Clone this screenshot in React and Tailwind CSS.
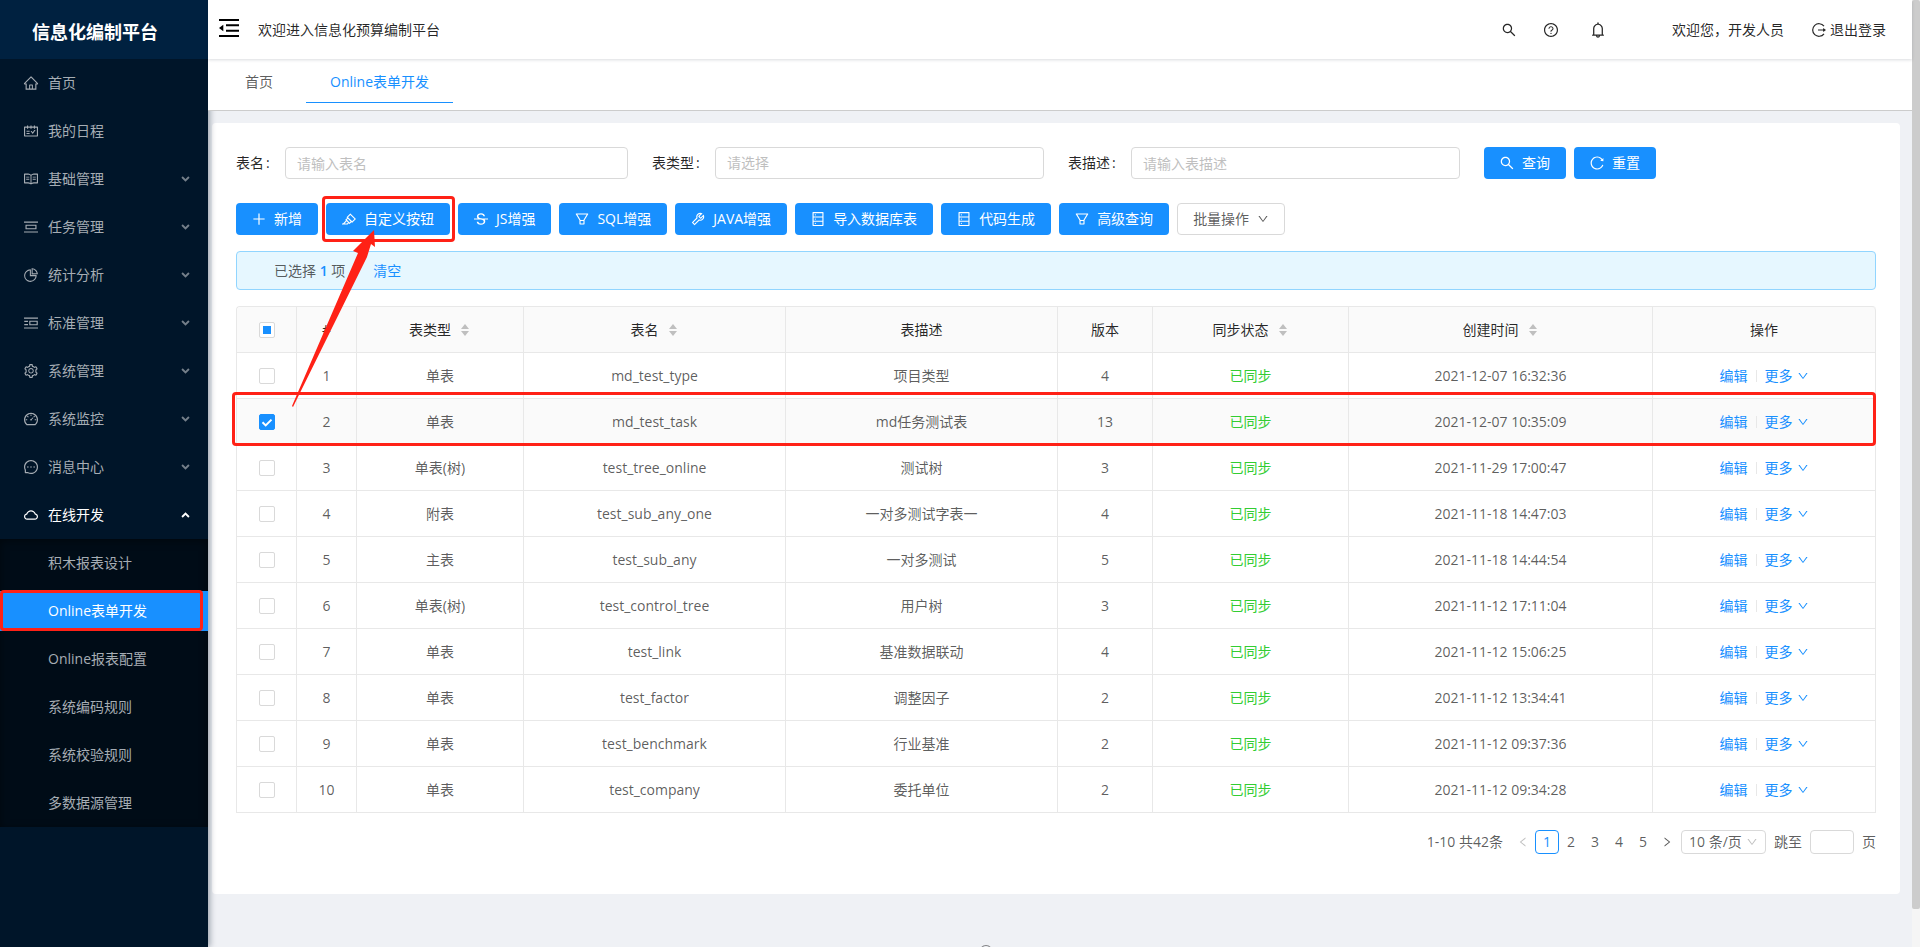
import { useState } from 'react'
import { clsx } from 'clsx'
import {
  AiOutlineHome,
  AiOutlineSchedule,
  AiOutlineRead,
  AiOutlinePicCenter,
  AiOutlinePieChart,
  AiOutlinePicRight,
  AiOutlineSetting,
  AiOutlineDashboard,
  AiOutlineMessage,
  AiOutlineCloud,
  AiOutlineSearch,
  AiOutlineQuestionCircle,
  AiOutlineBell,
  AiOutlinePlus,
  AiOutlineHighlight,
  AiOutlineStrikethrough,
  AiOutlineFilter,
  AiOutlineTool,
  AiOutlineDatabase,
  AiOutlineReload,
  AiOutlineDown,
  AiOutlineLeft,
  AiOutlineRight,
  AiOutlineCopyright,
} from 'react-icons/ai'

const MENU = [
  { label: '首页', icon: AiOutlineHome },
  { label: '我的日程', icon: AiOutlineSchedule },
  { label: '基础管理', icon: AiOutlineRead, group: true },
  { label: '任务管理', icon: AiOutlinePicCenter, group: true },
  { label: '统计分析', icon: AiOutlinePieChart, group: true },
  { label: '标准管理', icon: AiOutlinePicRight, group: true },
  { label: '系统管理', icon: AiOutlineSetting, group: true },
  { label: '系统监控', icon: AiOutlineDashboard, group: true },
  { label: '消息中心', icon: AiOutlineMessage, group: true },
  { label: '在线开发', icon: AiOutlineCloud, group: true, open: true },
]

const SUBMENU = ['积木报表设计', 'Online表单开发', 'Online报表配置', '系统编码规则', '系统校验规则', '多数据源管理']

const ACTIONS = [
  { label: '新增', icon: AiOutlinePlus },
  { label: '自定义按钮', icon: AiOutlineHighlight, marked: true },
  { label: 'JS增强', icon: AiOutlineStrikethrough },
  { label: 'SQL增强', icon: AiOutlineFilter },
  { label: 'JAVA增强', icon: AiOutlineTool },
  { label: '导入数据库表', icon: AiOutlineDatabase },
  { label: '代码生成', icon: AiOutlineDatabase },
  { label: '高级查询', icon: AiOutlineFilter },
]

const COLUMNS = [
  { label: '#', width: 'w-[60px]' },
  { label: '表类型', width: 'w-[167px]', sort: true },
  { label: '表名', width: 'w-[262px]', sort: true },
  { label: '表描述', width: 'w-[272px]' },
  { label: '版本', width: 'w-[95px]' },
  { label: '同步状态', width: 'w-[196px]', sort: true },
  { label: '创建时间', width: 'w-[304px]', sort: true },
  { label: '操作', width: 'w-[223px]' },
]

const ROWS = [
  ['单表', 'md_test_type', '项目类型', 4, '2021-12-07 16:32:36'],
  ['单表', 'md_test_task', 'md任务测试表', 13, '2021-12-07 10:35:09'],
  ['单表(树)', 'test_tree_online', '测试树', 3, '2021-11-29 17:00:47'],
  ['附表', 'test_sub_any_one', '一对多测试字表一', 4, '2021-11-18 14:47:03'],
  ['主表', 'test_sub_any', '一对多测试', 5, '2021-11-18 14:44:54'],
  ['单表(树)', 'test_control_tree', '用户树', 3, '2021-11-12 17:11:04'],
  ['单表', 'test_link', '基准数据联动', 4, '2021-11-12 15:06:25'],
  ['单表', 'test_factor', '调整因子', 2, '2021-11-12 13:34:41'],
  ['单表', 'test_benchmark', '行业基准', 2, '2021-11-12 09:37:36'],
  ['单表', 'test_company', '委托单位', 2, '2021-11-12 09:34:28'],
]

const fieldClass =
  'h-8 min-w-0 flex-1 appearance-none rounded border border-[#d9d9d9] bg-white px-[11px] outline-none placeholder:text-[#bfbfbf]'

const buttonClass = 'relative flex h-8 items-center gap-[7px] rounded bg-[#1890ff] pr-4 pl-[15px] text-white'

const Arrow = ({ up }) => (
  <svg viewBox="0 0 10 7" className={clsx('h-1.5 w-[9px]', !up && 'opacity-70')} fill="none" stroke="currentColor" strokeWidth="2.2">
    <path d={up ? 'M1 5.8 5 1.8 9 5.8' : 'M1 1.2 5 5.2 9 1.2'} />
  </svg>
)

const Sidebar = () => (
  <aside className="relative z-20 w-52 shrink-0 bg-[#001529] text-[#a6adb4] shadow-[2px_0_6px_rgba(0,21,41,0.35)]">
    <h1 className="flex h-[59px] items-center bg-[#002140] pt-1 pl-8 text-lg font-bold text-white">信息化编制平台</h1>
    <nav>
      {MENU.map(({ label, icon: Icon, group, open }) => (
        <a key={label} href="#" className={clsx('flex h-12 items-center gap-[9px] pr-[18px] pl-[23px]', open && 'text-white')}>
          <Icon size={16} />
          <span className="flex-1">{label}</span>
          {group && <Arrow up={open} />}
        </a>
      ))}
      <div className="bg-[#000c17] shadow-[inset_0_2px_8px_rgba(0,0,0,0.45)]">
        {SUBMENU.map((label, i) => (
          <div key={label} className="py-1">
            <a href="#" className={clsx('relative flex h-10 items-center pl-12', i === 1 && 'bg-[#1890ff] text-white')}>
              {label}
              {i === 1 && <span className="absolute -top-px right-[5px] bottom-0 left-0 rounded-sm border-3 border-[#ff2116]" />}
            </a>
          </div>
        ))}
      </div>
    </nav>
  </aside>
)

const Header = () => (
  <header className="relative z-40 flex h-[59px] shrink-0 items-center bg-white pr-[26px] pl-[11px] text-black/85 shadow-[0_1px_3px_rgba(0,21,41,0.15)]">
    <button aria-label="收起菜单" className="mb-1 text-black">
      <svg viewBox="0 0 20 18" className="h-[18px] w-5" fill="none" stroke="currentColor" strokeWidth="2">
        <path d="M0 1h20M7 6.3h13M7 11.7h13M0 17h20" />
        <path d="M0 9 4.3 5.7v6.6z" fill="currentColor" stroke="none" />
      </svg>
    </button>
    <span className="flex-1 pl-[19px]">欢迎进入信息化预算编制平台</span>
    <button aria-label="搜索"><AiOutlineSearch size={16} /></button>
    <button aria-label="帮助" className="ml-[26px]"><AiOutlineQuestionCircle size={16} /></button>
    <button aria-label="通知" className="ml-[30px]"><AiOutlineBell size={18} /></button>
    <span className="pl-[65px]">欢迎您，开发人员</span>
    <a href="#" className="ml-7 flex items-center gap-1">
      <svg viewBox="0 0 14 14" className="size-3.5" fill="none" stroke="currentColor" strokeWidth="1.2">
        <path d="M12 3.2A6.3 6.3 0 1 0 12 10.8M6 7h6" />
        <path d="M11.2 5 14 7 11.2 9z" fill="currentColor" stroke="none" />
      </svg>
      退出登录
    </a>
  </header>
)

const Field = ({ id, label, children }) => (
  <div className="flex items-center">
    <label htmlFor={id} className="text-black/85">{label}</label>
    <span className="w-[21px] pl-0.5 text-black/85">:</span>
    {children}
  </div>
)

const SearchForm = () => (
  <form className="grid grid-cols-4 gap-6">
    <Field id="name" label="表名">
      <input id="name" placeholder="请输入表名" className={fieldClass} />
    </Field>
    <Field id="type" label="表类型">
      <select id="type" className={clsx(fieldClass, 'text-[#bfbfbf]')}>
        <option>请选择</option>
      </select>
    </Field>
    <Field id="desc" label="表描述">
      <input id="desc" placeholder="请输入表描述" className={fieldClass} />
    </Field>
    <div className="flex gap-2">
      <button type="button" className={buttonClass}>
        <AiOutlineSearch size={16} />
        查询
      </button>
      <button type="button" className={buttonClass}>
        <AiOutlineReload size={16} />
        重置
      </button>
    </div>
  </form>
)

const Toolbar = () => (
  <div className="mt-6 flex flex-wrap gap-2">
    {ACTIONS.map(({ label, icon: Icon, marked }) => (
      <button key={label} className={buttonClass}>
        <Icon size={16} />
        {label}
        {marked && <span className="absolute -inset-y-[7px] -right-[5px] -left-1 rounded border-3 border-[#ff2116]" />}
      </button>
    ))}
    <button className="flex h-8 items-center gap-2 rounded border border-[#d9d9d9] bg-white px-[15px]">
      批量操作
      <AiOutlineDown size={12} />
    </button>
  </div>
)

const Check = ({ label, checked, partial, onChange }) => (
  <label className="relative mx-auto block size-4">
    <input
      type="checkbox"
      aria-label={label}
      checked={checked}
      onChange={onChange}
      className="block size-4 appearance-none rounded-xs border border-[#d9d9d9] bg-white checked:border-[#1890ff] checked:bg-[#1890ff]"
    />
    {partial && <span className="absolute inset-1 bg-[#1890ff]" />}
    {checked && (
      <svg viewBox="0 0 16 16" className="absolute inset-0 size-4" fill="none" stroke="#fff" strokeWidth="2">
        <path d="m3.5 8.2 3.2 3.2 5.8-5.8" />
      </svg>
    )}
  </label>
)

const Sorter = () => (
  <svg viewBox="0 0 8 12" className="mr-0.5 h-3 w-2" fill="#bfbfbf">
    <path d="M4 0 8 5H0zM0 7h8l-4 5z" />
  </svg>
)

const DataTable = () => {
  const [selected, setSelected] = useState([1])
  const toggle = (i) => setSelected((s) => (s.includes(i) ? s.filter((n) => n !== i) : [...s, i]))

  return (
    <div className="relative mt-4">
      <table className="w-full table-fixed border-separate border-spacing-0 rounded-t border-t border-l border-[#e8e8e8] text-center">
        <thead className="bg-[#fafafa] text-black/85">
          <tr className="h-[46px]">
            <th className="w-[60px] rounded-tl border-r border-b border-[#e8e8e8]">
              <Check label="全选" checked={false} partial={selected.length > 0} onChange={() => setSelected([])} />
            </th>
            {COLUMNS.map(({ label, width, sort }) => (
              <th key={label} className={clsx('border-r border-b border-[#e8e8e8] font-normal last:rounded-tr', width)}>
                <span className="flex items-center justify-center gap-2.5">
                  {label}
                  {sort && <Sorter />}
                </span>
              </th>
            ))}
          </tr>
        </thead>
        <tbody>
          {ROWS.map(([type, name, desc, version, time], i) => (
            <tr
              key={name}
              className={clsx('h-[46px] *:border-r *:border-b *:border-[#e8e8e8]', selected.includes(i) && 'bg-[#fafafa]')}
            >
              <td><Check label={name} checked={selected.includes(i)} onChange={() => toggle(i)} /></td>
              <td>{i + 1}</td>
              <td>{type}</td>
              <td>{name}</td>
              <td>{desc}</td>
              <td>{version}</td>
              <td className="text-[#32cd32]">已同步</td>
              <td>{time}</td>
              <td>
                <span className="flex items-center justify-center text-[#1890ff]">
                  <a href="#">编辑</a>
                  <span className="mx-2 h-3 w-px bg-[#e8e8e8]" />
                  <a href="#" className="flex items-center gap-1">
                    更多
                    <AiOutlineDown size={12} />
                  </a>
                </span>
              </td>
            </tr>
          ))}
        </tbody>
      </table>

      {/* callout round the second row, with the arrow up to its button */}
      <div className="pointer-events-none absolute top-[86px] right-0 -left-1 h-[54px] rounded-sm border-3 border-[#ff2116]" />
      <svg viewBox="0 0 86 182" className="pointer-events-none absolute -top-20 left-14 h-[182px] w-[86px]" fill="#ff2116">
        <path d="M0 180 66 27 61 25 82 4 83 21 79 18 75 31 1 181z" />
      </svg>
    </div>
  )
}

const Pagination = () => (
  <div className="mt-[17px] flex h-6 items-center justify-end">
    <span className="mr-2">1-10 共42条</span>
    <button aria-label="上一页" className="flex size-6 items-center justify-center text-black/25">
      <AiOutlineLeft size={12} />
    </button>
    {[1, 2, 3, 4, 5].map((n) => (
      <button key={n} className={clsx('size-6 rounded', n === 1 && 'border border-[#1890ff] text-[#1890ff]')}>
        {n}
      </button>
    ))}
    <button aria-label="下一页" className="flex size-6 items-center justify-center">
      <AiOutlineRight size={12} />
    </button>
    <span className="relative ml-0.5">
      <select aria-label="每页条数" className="block h-6 w-[85px] appearance-none rounded border border-[#d9d9d9] bg-white pl-[7px] leading-5">
        <option>10 条/页</option>
      </select>
      <AiOutlineDown size={12} className="pointer-events-none absolute top-1.5 right-2 text-black/25" />
    </span>
    <label htmlFor="jump" className="mx-2">跳至</label>
    <input id="jump" className="mr-2 h-6 w-11 rounded border border-[#d9d9d9] bg-white px-2" />
    页
  </div>
)

export default function App() {
  return (
    <div className="flex h-screen overflow-hidden bg-[#eff1f5] font-['Open_Sans','Noto_Sans_CJK_SC',sans-serif] text-sm text-black/65">
      <Sidebar />
      <div className="flex min-w-0 flex-1 flex-col">
        <Header />
        <nav className="relative z-30 flex h-[52px] shrink-0 gap-[9px] border-b border-[#ccc] bg-white pl-[13px]">
          <a href="#" className="flex h-11 items-center px-6 pt-0.5">首页</a>
          <a href="#" className="flex h-11 items-center border-b border-[#1890ff] px-6 pt-0.5 text-[#1890ff]">Online表单开发</a>
        </nav>
        <main className="mt-3 mr-3 ml-1 shrink-0 rounded-sm bg-white px-6 pt-6 pb-10">
          <SearchForm />
          <Toolbar />
          <div className="mt-4 flex h-[39px] items-center rounded border border-[#91d5ff] bg-[#e6f7ff] pl-[37px]">
            <span>
              已选择 <b className="font-semibold text-[#1890ff]">1</b> 项
            </span>
            <a href="#" className="ml-7 text-[#1890ff]">清空</a>
          </div>
          <DataTable />
          <Pagination />
        </main>
        <footer className="mt-[50px] flex shrink-0 justify-center pr-[148px] text-black/45">
          <AiOutlineCopyright size={14} />
        </footer>
      </div>
      <div className="w-2 shrink-0 bg-[#f5f5f5]">
        <div className="h-24/25 rounded-xs bg-[#ccc]" />
      </div>
    </div>
  )
}
